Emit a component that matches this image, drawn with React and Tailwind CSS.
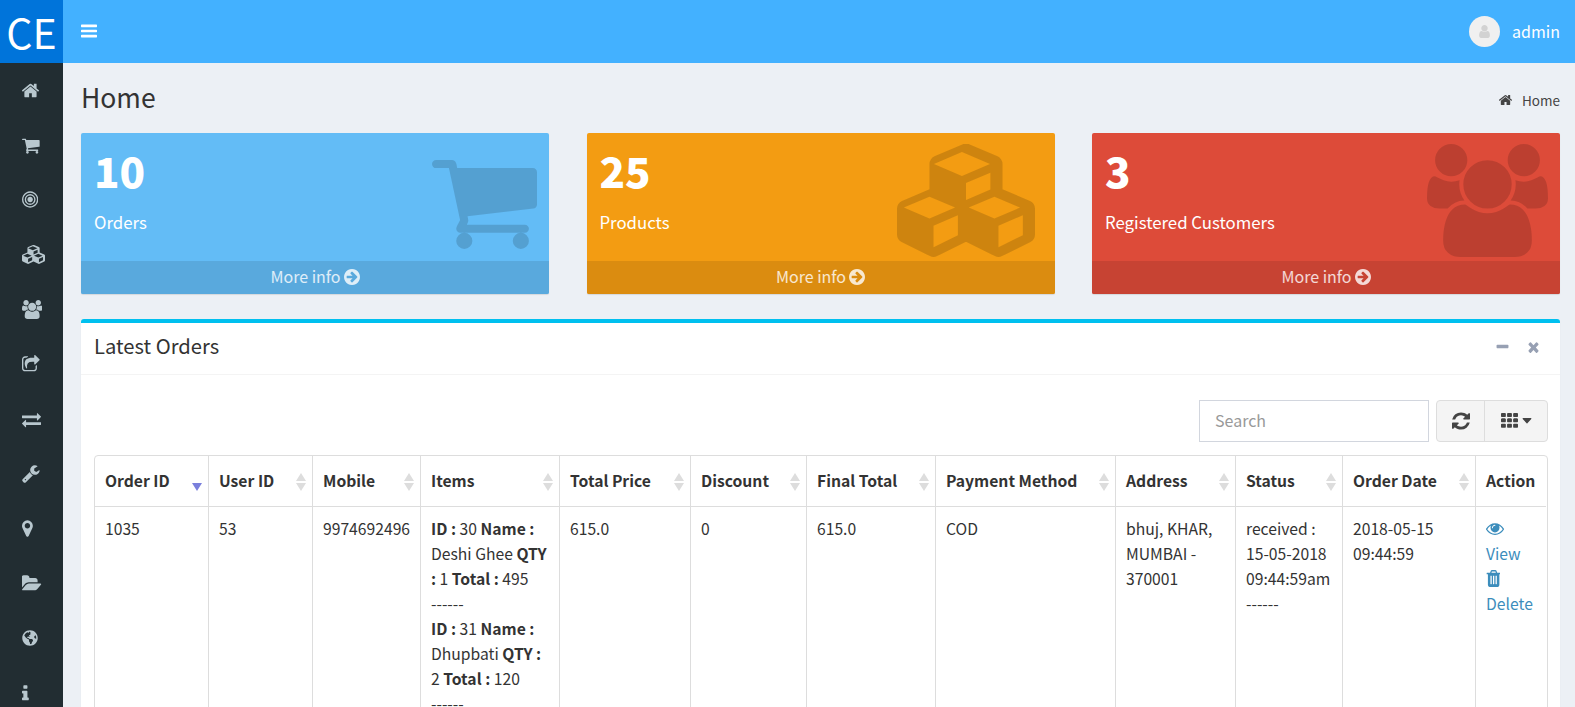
import React from "react";
import { FaGlobeAmericas } from "react-icons/fa";

const P = {
  home: "M1472 992v480q0 26-19 45t-45 19h-384v-384h-256v384h-384q-26 0-45-19t-19-45v-480q0-1 .5-3t.5-3l575-474 575 474q1 2 1 6zm223-69l-62 74q-8 9-21 11h-3q-13 0-21-7l-692-577-692 577q-12 8-24 7-13-2-21-11l-62-74q-8-10-7-23.5t11-21.5l719-599q32-26 76-26t76 26l244 204v-195q0-14 9-23t23-9h192q14 0 23 9t9 23v408l219 182q10 8 11 21.5t-7 23.5z",
  cart: "M704 1536q0 52-38 90t-90 38-90-38-38-90 38-90 90-38 90 38 38 90zm896 0q0 52-38 90t-90 38-90-38-38-90 38-90 90-38 90 38 38 90zm128-1088v512q0 24-16.5 42.5t-40.5 21.5l-1044 122q13 60 13 70 0 16-24 64h920q26 0 45 19t19 45-19 45-45 19h-1024q-26 0-45-19t-19-45q0-11 8-31.5t16-36 21.5-40 15.5-29.5l-177-823h-204q-26 0-45-19t-19-45 19-45 45-19h256q16 0 28.5 6.5t19.5 15.5 13 24.5 8 26 5.5 29.5 4.5 26h1201q26 0 45 19t19 45z",
  bars: "M1664 1344v128q0 26-19 45t-45 19h-1408q-26 0-45-19t-19-45v-128q0-26 19-45t45-19h1408q26 0 45 19t19 45zm0-512v128q0 26-19 45t-45 19h-1408q-26 0-45-19t-19-45v-128q0-26 19-45t45-19h1408q26 0 45 19t19 45zm0-512v128q0 26-19 45t-45 19h-1408q-26 0-45-19t-19-45v-128q0-26 19-45t45-19h1408q26 0 45 19t19 45z",
  bullseye: "M1152 896q0 106-75 181t-181 75-181-75-75-181 75-181 181-75 181 75 75 181zm128 0q0-159-112.5-271.5t-271.5-112.5-271.5 112.5-112.5 271.5 112.5 271.5 271.5 112.5 271.5-112.5 112.5-271.5zm128 0q0 212-150 362t-362 150-362-150-150-362 150-362 362-150 362 150 150 362zm128 0q0-130-51-248.5t-136.5-204-204-136.5-248.5-51-248.5 51-204 136.5-136.5 204-51 248.5 51 248.5 136.5 204 204 136.5 248.5 51 248.5-51 204-136.5 136.5-204 51-248.5zm128 0q0 209-103 385.5t-279.5 279.5-385.5 103-385.5-103-279.5-279.5-103-385.5 103-385.5 279.5-279.5 385.5-103 385.5 103 279.5 279.5 103 385.5z",
  cubes: "M640 1632l384-192v-314l-384 164v342zm-64-454l404-173-404-173-404 173zm1088 454l384-192v-314l-384 164v342zm-64-454l404-173-404-173-404 173zm-448-293l384-165v-266l-384 164v267zm-64-379l441-189-441-189-441 189zm1152 511v416q0 36-19 67t-52 47l-448 224q-25 14-57 14t-57-14l-448-224q-4-2-7-4-2 2-7 4l-448 224q-25 14-57 14t-57-14l-448-224q-33-16-52-47t-19-67v-416q0-38 21.5-70t56.5-48l434-186v-400q0-38 21.5-70t56.5-48l448-192q23-10 50-10t50 10l448 192q35 16 56.5 48t21.5 70v400l434 186q36 16 57 48t21 70z",
  users: "M593 896q-162 5-265 128h-134q-82 0-138-40.5t-56-118.5q0-353 124-353 6 0 43.5 21t97.5 42.5 119 21.5q67 0 133-23-5 37-5 66 0 139 81 256zm1071 637q0 120-73 189.5t-194 69.5h-874q-121 0-194-69.5t-73-189.5q0-53 3.5-103.5t14-109 26.5-108.5 43-97.5 62-81 85.5-53.5 111.5-20q10 0 43 21.5t73 48 107 48 135 21.5 135-21.5 107-48 73-48 43-21.5q61 0 111.5 20t85.5 53.5 62 81 43 97.5 26.5 108.5 14 109 3.5 103.5zm-1024-1277q0 106-75 181t-181 75-181-75-75-181 75-181 181-75 181 75 75 181zm704 384q0 159-112.5 271.5t-271.5 112.5-271.5-112.5-112.5-271.5 112.5-271.5 271.5-112.5 271.5 112.5 112.5 271.5zm576 225q0 78-56 118.5t-138 40.5h-134q-103-123-265-128 81-117 81-256 0-29-5-66 66 23 133 23 59 0 119-21.5t97.5-42.5 43.5-21q124 0 124 353zm-128-609q0 106-75 181t-181 75-181-75-75-181 75-181 181-75 181 75 75 181z",
  share: "M1472 989v259q0 119-84.5 203.5t-203.5 84.5h-832q-119 0-203.5-84.5t-84.5-203.5v-832q0-119 84.5-203.5t203.5-84.5h255q13 0 22.5 9.5t9.5 22.5q0 27-26 32-77 26-133 60-10 4-16 4h-112q-66 0-113 47t-47 113v832q0 66 47 113t113 47h832q66 0 113-47t47-113v-214q0-19 18-29 28-13 54-37 16-16 35-8 21 9 21 29zm237-496l-384 384q-18 19-45 19-12 0-25-5-39-17-39-59v-192h-160q-323 0-438 131-119 137-74 473 3 23-20 34-8 2-12 2-16 0-26-13-10-14-21-31t-39.5-68.5-49.5-99.5-38.5-114-17.5-122q0-49 3.5-91t14-90 28-88 47-81.5 68.5-74 94.5-61.5 124.5-48.5 159.5-30.5 196.5-11h160v-192q0-42 39-59 13-5 25-5 26 0 45 19l384 384q19 19 19 45t-19 45z",
  exchange: "M1792 1184v192q0 13-9.5 22.5t-22.5 9.5h-1376v192q0 13-9.5 22.5t-22.5 9.5q-12 0-24-10l-319-320q-9-9-9-22 0-14 9-23l320-320q9-9 23-9 13 0 22.5 9.5t9.5 22.5v192h1376q13 0 22.5 9.5t9.5 22.5zm0-544q0 14-9 23l-320 320q-9 9-23 9-13 0-22.5-9.5t-9.5-22.5v-192h-1376q-13 0-22.5-9.5t-9.5-22.5v-192q0-13 9.5-22.5t22.5-9.5h1376v-192q0-14 9-23t23-9q12 0 24 10l319 319q9 9 9 23z",
  wrench: "M448 1472q0-26-19-45t-45-19-45 19-19 45 19 45 45 19 45-19 19-45zm644-420l-682 682q-37 37-90 37-52 0-91-37l-106-108q-38-36-38-90 0-53 38-91l681-681q39 98 114.5 173.5t173.5 114.5zm634-435q0 39-23 106-47 134-164.5 217.5t-258.5 83.5q-185 0-316.5-131.5t-131.5-316.5 131.5-316.5 316.5-131.5q58 0 121.5 16.5t107.5 46.5q16 11 16 28t-16 28l-293 169v224l193 107q5-3 79-48.5t135.5-81 70.5-35.5q15 0 23.5 10t8.5 25z",
  marker: "M1152 640q0-106-75-181t-181-75-181 75-75 181 75 181 181 75 181-75 75-181zm256 0q0 109-33 179l-364 774q-16 33-47.5 52t-67.5 19-67.5-19-46.5-52l-365-774q-33-70-33-179 0-212 150-362t362-150 362 150 150 362z",
  folder: "M1815 952q0 31-31 66l-336 396q-43 51-120.5 86.5t-143.5 35.5h-1088q-34 0-60.5-13t-26.5-43q0-31 31-66l336-396q43-51 120.5-86.5t143.5-35.5h1088q34 0 60.5 13t26.5 43zm-343-344v160h-832q-94 0-197 47.5t-164 119.5l-337 396-5 6q0-4-.5-12.5t-.5-12.5v-960q0-92 66-158t158-66h320q92 0 158 66t66 158v32h544q92 0 158 66t66 158z",
  info: "M1216 1344v128q0 26-19 45t-45 19h-512q-26 0-45-19t-19-45v-128q0-26 19-45t45-19h64v-384h-64q-26 0-45-19t-19-45v-128q0-26 19-45t45-19h384q26 0 45 19t19 45v576h64q26 0 45 19t19 45zm-128-1152v192q0 26-19 45t-45 19h-256q-26 0-45-19t-19-45v-192q0-26 19-45t45-19h256q26 0 45 19t19 45z",
  refresh: "M1639 1056q0 5-1 7-64 268-268 434.5t-478 166.5q-146 0-282.5-55t-243.5-157l-129 129q-19 19-45 19t-45-19-19-45v-448q0-26 19-45t45-19h448q26 0 45 19t19 45-19 45l-137 137q71 66 161 102t187 36q134 0 250-65t186-179q11-17 53-117 8-23 30-23h192q13 0 22.5 9.5t9.5 22.5zm25-800v448q0 26-19 45t-45 19h-448q-26 0-45-19t-19-45 19-45l138-138q-148-137-349-137-134 0-250 65t-186 179q-11 17-53 117-8 23-30 23h-199q-13 0-22.5-9.5t-9.5-22.5v-7q65-268 270-434.5t480-166.5q146 0 284 55.5t245 156.5l130-129q19-19 45-19t45 19 19 45z",
  th: "M512 1248v192q0 40-28 68t-68 28h-320q-40 0-68-28t-28-68v-192q0-40 28-68t68-28h320q40 0 68 28t28 68zm0-512v192q0 40-28 68t-68 28h-320q-40 0-68-28t-28-68v-192q0-40 28-68t68-28h320q40 0 68 28t28 68zm640 512v192q0 40-28 68t-68 28h-320q-40 0-68-28t-28-68v-192q0-40 28-68t68-28h320q40 0 68 28t28 68zm-640-1024v192q0 40-28 68t-68 28h-320q-40 0-68-28t-28-68v-192q0-40 28-68t68-28h320q40 0 68 28t28 68zm640 512v192q0 40-28 68t-68 28h-320q-40 0-68-28t-28-68v-192q0-40 28-68t68-28h320q40 0 68 28t28 68zm640 512v192q0 40-28 68t-68 28h-320q-40 0-68-28t-28-68v-192q0-40 28-68t68-28h320q40 0 68 28t28 68zm-640-1024v192q0 40-28 68t-68 28h-320q-40 0-68-28t-28-68v-192q0-40 28-68t68-28h320q40 0 68 28t28 68zm640 512v192q0 40-28 68t-68 28h-320q-40 0-68-28t-28-68v-192q0-40 28-68t68-28h320q40 0 68 28t28 68zm0-512v192q0 40-28 68t-68 28h-320q-40 0-68-28t-28-68v-192q0-40 28-68t68-28h320q40 0 68 28t28 68z",
  arrow: "M1413 896q0-27-18-45l-91-91-362-362q-18-18-45-18t-45 18l-91 91q-18 18-18 45t18 45l189 189h-502q-26 0-45 19t-19 45v128q0 26 19 45t45 19h502l-189 189q-19 19-19 45t19 45l91 91q18 18 45 18t45-18l362-362 91-91q18-18 18-45zm251 0q0 209-103 385.5t-279.5 279.5-385.5 103-385.5-103-279.5-279.5-103-385.5 103-385.5 279.5-279.5 385.5-103 385.5 103 279.5 279.5 103 385.5z",
  minus: "M1600 736v192q0 40-28 68t-68 28h-1216q-40 0-68-28t-28-68v-192q0-40 28-68t68-28h1216q40 0 68 28t28 68z",
  times: "M1490 1322q0 40-28 68l-136 136q-28 28-68 28t-68-28l-294-294-294 294q-28 28-68 28t-68-28l-136-136q-28-28-28-68t28-68l294-294-294-294q-28-28-28-68t28-68l136-136q28-28 68-28t68 28l294 294 294-294q28-28 68-28t68 28l136 136q28 28 28 68t-28 68l-294 294 294 294q28 28 28 68z",
  eye: "M1664 960q-152-236-381-353 61 104 61 225 0 185-131.5 316.5t-316.5 131.5-316.5-131.5-131.5-316.5q0-121 61-225-229 117-381 353 133 205 333.5 326.5t434.5 121.5 434.5-121.5 333.5-326.5zm-720-384q0-20-14-34t-34-14q-125 0-214.5 89.5t-89.5 214.5q0 20 14 34t34 14 34-14 14-34q0-86 61-147t147-61q20 0 34-14t14-34zm848 384q0 34-20 69-140 230-376.5 368.5t-499.5 138.5-499.5-139-376.5-368q-20-35-20-69t20-69q140-229 376.5-368t499.5-139 499.5 139 376.5 368q20 35 20 69z",
  trash: "M704 1376v-704q0-14-9-23t-23-9h-64q-14 0-23 9t-9 23v704q0 14 9 23t23 9h64q14 0 23-9t9-23zm256 0v-704q0-14-9-23t-23-9h-64q-14 0-23 9t-9 23v704q0 14 9 23t23 9h64q14 0 23-9t9-23zm256 0v-704q0-14-9-23t-23-9h-64q-14 0-23 9t-9 23v704q0 14 9 23t23 9h64q14 0 23-9t9-23zm-544-992h448l-48-117q-7-9-17-11h-317q-10 2-17 11zm928 32v64q0 14-9 23t-23 9h-96v948q0 83-47 143.5t-113 60.5h-832q-66 0-113-58.5t-47-141.5v-952h-96q-14 0-23-9t-9-23v-64q0-14 9-23t23-9h309l70-167q15-37 54-63t79-26h320q40 0 79 26t54 63l70 167h309q14 0 23 9t9 23z",
  caret: "M1408 704q0 26-19 45l-448 448q-19 19-45 19t-45-19l-448-448q-19-19-19-45t19-45 45-19h896q26 0 45 19t19 45z",
  user: "M1536 1399q0 109-62.5 187t-150.5 78h-854q-88 0-150.5-78t-62.5-187q0-85 8.5-160.5t31.5-152 58.5-131 94-89 134.5-34.5q131 128 313 128t313-128q76 0 134.5 34.5t94 89 58.5 131 31.5 152 8.5 160.5zm-256-887q0 159-112.5 271.5t-271.5 112.5-271.5-112.5-112.5-271.5 112.5-271.5 271.5-112.5 271.5 112.5 112.5 271.5z",
};

function Fa({ d, vb = "0 0 1792 1792", className = "", rule }) {
  return (
    <svg viewBox={vb} className={className} fill="currentColor" fillRule={rule} preserveAspectRatio="none" aria-hidden="true">
      <path d={d} />
    </svg>
  );
}

const nav = [
  [P.home, "96 0 1600 1792"],
  [P.cart, "64 0 1664 1792"],
  [P.bullseye, "128 0 1536 1792"],
  [P.cubes, "64 0 2176 1792"],
  [P.users, "0 0 1920 1792"],
  [P.share, "64 0 1664 1792"],
  [P.exchange, "0 0 1792 1792"],
  [P.wrench, "64 0 1664 1792"],
  [P.marker, "384 0 1024 1792"],
  [P.folder, "0 0 1920 1792"],
  null,
  [P.info, "576 0 640 1792"],
];

function Card({ bg, foot, num, label, children }) {
  return (
    <div className={`relative flex h-[161px] flex-col overflow-hidden rounded-[2px] shadow-[0_1px_1px_rgba(0,0,0,0.1)] ${bg}`}>
      <div className="h-[128px] px-[13px] pt-[13px] text-white">
        <div className="text-[42px] leading-[48px] font-black">{num}</div>
        <div className="mt-[16px] text-[16.8px] leading-[25px]">{label}</div>
      </div>
      {children}
      <div className={`flex h-[33px] items-center justify-center gap-[3px] pb-[2px] text-[16px] text-white/80 ${foot}`}>
        <span>More info</span>
        <Fa d={P.arrow} vb="128 128 1536 1536" rule="evenodd" className="h-[16px] w-[16px]" />
      </div>
    </div>
  );
}

function Sort({ active }) {
  return (
    <svg viewBox="0 0 10 18" className="absolute top-[17px] right-[6px] h-[18px] w-[10px]" aria-hidden="true">
      {!active && <path d="M5 0l5 8H0z" fill="#dddddd" />}
      <path d="M5 18l5-8H0z" fill={active ? "#7a7fdc" : "#dddddd"} />
    </svg>
  );
}

const cols = ["w-[113px]", "w-[104px]", "w-[108px]", "w-[139px]", "w-[131px]", "w-[116px]", "w-[129px]", "w-[180px]", "w-[120px]", "w-[107px]", "w-[133px]", "w-[71px]"];
const heads = ["Order ID", "User ID", "Mobile", "Items", "Total Price", "Discount", "Final Total", "Payment Method", "Address", "Status", "Order Date", "Action"];
const td = "border-l border-[#dddddd] px-[10px] pt-[9px] pb-[10px] align-top first:border-l-0";

export default function App() {
  return (
    <div className="flex h-[707px] flex-col overflow-hidden bg-[#ecf0f5] font-['Noto_Sans_CJK_SC',sans-serif] text-[16px] leading-[25px] text-[#333333]">
      <header className="flex h-[63px] shrink-0 bg-[#43b1ff] text-white">
        <div className="flex w-[63px] items-center justify-center bg-[#0074da] text-[41px] leading-none">CE</div>
        <div className="flex flex-1 items-center justify-between pr-[15px] pl-[18px]">
          <Fa d={P.bars} vb="128 0 1536 1792" className="mb-[2px] h-[18px] w-[16px]" />
          <div className="flex items-center gap-[12px]">
            <div className="flex h-[31px] w-[31px] items-center justify-center rounded-full bg-[#f0f0f0] text-[#d2d2d2]">
              <Fa d={P.user} className="h-[15px] w-[15px]" />
            </div>
            <span className="text-[16px]">admin</span>
          </div>
        </div>
      </header>
      <div className="flex min-h-0 flex-1">
        <aside className="w-[63px] shrink-0 bg-[#222d32] text-[#b8c7ce]">
          {nav.map((n, i) => (
            <div key={i} className="flex h-[54.8px] items-center pl-[22px]">
              {n ? <Fa d={n[0]} vb={n[1]} className="h-[19px] w-auto" /> : <FaGlobeAmericas className="h-[16px] w-[16px]" />}
            </div>
          ))}
        </aside>
        <main className="min-w-0 flex-1 pr-[15px] pl-[18px]">
          <div className="flex h-[70px] items-center justify-between">
            <h1 className="mb-[2px] text-[26.5px] leading-none font-normal">Home</h1>
            <div className="mt-[4px] flex items-center gap-[10px] text-[13.5px] text-[#444444]">
              <Fa d={P.home} vb="96 0 1600 1792" className="h-[14px] w-[13px]" />
              <span>Home</span>
            </div>
          </div>
          <div className="grid grid-cols-3 gap-[37.5px]">
            <Card bg="bg-[#63bcf6]" foot="bg-[#59a9dd]" num="10" label="Orders">
              <Fa d={P.cart} vb="64 256 1664 1408" className="absolute top-[27px] right-[12px] h-[89px] w-[105px] text-black/15" />
            </Card>
            <Card bg="bg-[#f39c12]" foot="bg-[#db8c10]" num="25" label="Products">
              <Fa d={P.cubes} vb="64 0 2176 1785" className="absolute top-[11px] right-[20px] h-[113px] w-[138px] text-black/15" />
            </Card>
            <Card bg="bg-[#dd4b39]" foot="bg-[#c74333]" num="3" label="Registered Customers">
              <Fa d={P.users} vb="0 0 1920 1792" className="absolute top-[11px] right-[12px] h-[113px] w-[121px] text-black/15" />
            </Card>
          </div>
          <section className="mt-[25px] rounded-[3px] border-t-4 border-[#00c0ef] bg-white pb-[40px] shadow-[0_1px_1px_rgba(0,0,0,0.1)]">
            <div className="flex h-[52px] items-center justify-between border-b border-[#f4f4f4] pr-[20px] pl-[13px]">
              <h3 className="mb-[5px] text-[20.2px] leading-none font-normal">Latest Orders</h3>
              <div className="mb-[3px] flex items-center gap-[18px] text-[#97a0b3]">
                <Fa d={P.minus} vb="128 0 1536 1792" className="h-[16px] w-[13px]" />
                <Fa d={P.times} vb="128 0 1536 1792" className="h-[16px] w-[13px]" />
              </div>
            </div>
            <div className="pt-[25px] pr-[12px] pl-[13px]">
              <div className="flex justify-end gap-[7px]">
                <input placeholder="Search" readOnly className="h-[42px] w-[230px] border border-[#d2d6de] bg-white px-[15px] pb-[2px] text-[16px] outline-none placeholder:text-[#999999]" />
                <div className="flex h-[42px] rounded-[4px] border border-[#dddddd] bg-[#f4f4f4] text-[#444444]">
                  <div className="flex w-[48px] items-center justify-center border-r border-[#dddddd]">
                    <Fa d={P.refresh} vb="128 0 1536 1792" className="h-[20px] w-[18px]" />
                  </div>
                  <div className="flex w-[62px] items-center justify-center gap-[4px]">
                    <Fa d={P.th} vb="0 128 1792 1536" className="h-[16px] w-[17px]" />
                    <Fa d={P.caret} vb="320 640 1152 640" className="h-[6px] w-[10px]" />
                  </div>
                </div>
              </div>
              <div className="mt-[13px] overflow-hidden rounded-t-[4px] border border-[#dddddd] text-[15.7px]">
                <table className="w-[1451px] table-fixed border-separate border-spacing-0">
                  <colgroup>
                    {cols.map((c, i) => (
                      <col key={i} className={c} />
                    ))}
                  </colgroup>
                  <thead>
                    <tr>
                      {heads.map((h, i) => (
                        <th key={h} className="relative h-[51px] border-b border-l border-[#dddddd] px-[10px] pb-[2px] text-left align-middle font-bold first:border-l-0">
                          {h}
                          {i < 11 && <Sort active={i === 0} />}
                        </th>
                      ))}
                    </tr>
                  </thead>
                  <tbody>
                    <tr>
                      <td className={td}>1035</td>
                      <td className={td}>53</td>
                      <td className={td}>9974692496</td>
                      <td className={td}>
                        <b>ID :</b> 30 <b>Name :</b><br />
                        Deshi Ghee <b>QTY</b><br />
                        <b>:</b> 1 <b>Total :</b> 495<br />
                        ------<br />
                        <b>ID :</b> 31 <b>Name :</b><br />
                        Dhupbati <b>QTY :</b><br />
                        2 <b>Total :</b> 120<br />
                        ------
                      </td>
                      <td className={td}>615.0</td>
                      <td className={td}>0</td>
                      <td className={td}>615.0</td>
                      <td className={td}>COD</td>
                      <td className={td}>bhuj, KHAR,<br />MUMBAI -<br />370001</td>
                      <td className={td}>received :<br />15-05-2018<br />09:44:59am<br />------</td>
                      <td className={td}>2018-05-15<br />09:44:59</td>
                      <td className={`${td} text-[#3c8dbc]`}>
                        <Fa d={P.eye} vb="0 256 1792 1280" className="mt-[6px] mb-[6px] h-[13px] w-[18px]" />
                        <div>View</div>
                        <Fa d={P.trash} vb="128 128 1408 1536" className="mt-[4px] mb-[4px] h-[17px] w-[14px]" />
                        <div>Delete</div>
                      </td>
                    </tr>
                  </tbody>
                </table>
              </div>
            </div>
          </section>
        </main>
      </div>
    </div>
  );
}
